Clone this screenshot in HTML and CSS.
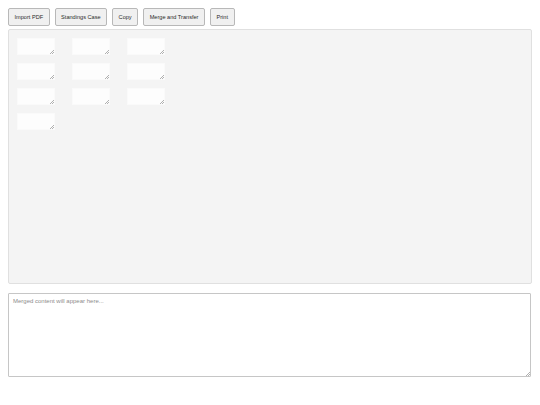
FILE: index.html
```html
<!DOCTYPE html>
<html>
<head>
<meta charset="utf-8">
<link rel="stylesheet" href="styles.css">
</head>
<body>
<div class="toolbar">
  <button class="btn">Import PDF</button>
  <button class="btn">Standings Case</button>
  <button class="btn">Copy</button>
  <button class="btn">Merge and Transfer</button>
  <button class="btn">Print</button>
</div>
<div class="panel">
  <div class="grid">
    <span class="cell-wrap"><textarea class="cell"></textarea></span>
    <span class="cell-wrap"><textarea class="cell"></textarea></span>
    <span class="cell-wrap"><textarea class="cell"></textarea></span>
    <span class="cell-wrap"><textarea class="cell"></textarea></span>
    <span class="cell-wrap"><textarea class="cell"></textarea></span>
    <span class="cell-wrap"><textarea class="cell"></textarea></span>
    <span class="cell-wrap"><textarea class="cell"></textarea></span>
    <span class="cell-wrap"><textarea class="cell"></textarea></span>
    <span class="cell-wrap"><textarea class="cell"></textarea></span>
    <span class="cell-wrap"><textarea class="cell"></textarea></span>
  </div>
</div>
<div class="output-wrap">
  <textarea class="output" placeholder="Merged content will appear here..."></textarea>
</div>
</body>
</html>
```

FILE: styles.css
```css
html, body {
  margin: 0;
  padding: 0;
  background: #ffffff;
}
body {
  padding: 8px;
  font-family: "Liberation Sans", Arial, sans-serif;
}
.toolbar {
  display: flex;
  gap: 5px;
  margin-bottom: 3px;
}
.btn {
  height: 18px;
  padding: 0 5.5px;
  font-family: "Liberation Sans", Arial, sans-serif;
  font-size: 5.6px;
  color: #2a2a2a;
  background: #f0f0f0;
  border: 1px solid #b8b8b8;
  border-radius: 2px;
}
.panel {
  box-sizing: border-box;
  width: 524px;
  height: 255px;
  background: #f4f4f4;
  border: 1px solid #e0e0e0;
  border-radius: 2px;
  padding: 8px;
}
.grid {
  display: grid;
  grid-template-columns: repeat(3, 38px);
  column-gap: 17px;
  row-gap: 8px;
}
.cell-wrap {
  position: relative;
  display: block;
  width: 38px;
  height: 17px;
}
.cell-wrap::after,
.output-wrap::after {
  content: "";
  position: absolute;
  right: 1px;
  bottom: 1px;
  width: 4px;
  height: 4px;
  background: linear-gradient(135deg,
    transparent 0, transparent 46%,
    #b0b0b0 46%, #b0b0b0 58%,
    transparent 58%, transparent 74%,
    #b0b0b0 74%, #b0b0b0 86%,
    transparent 86%);
}
.cell {
  display: block;
  box-sizing: border-box;
  width: 38px;
  height: 17px;
  margin: 0;
  padding: 1px;
  border: 1px solid #fafafa;
  background: #fdfdfd;
  font-size: 6px;
  resize: none;
  outline: none;
}
.output-wrap {
  position: relative;
  width: 523px;
  height: 84px;
  margin-top: 9px;
}
.output {
  display: block;
  box-sizing: border-box;
  width: 523px;
  height: 84px;
  margin: 0;
  padding: 4px 4px;
  border: 1px solid #c6c6c6;
  border-radius: 1px;
  font-family: "Liberation Sans", Arial, sans-serif;
  font-size: 6px;
  color: #333;
  resize: none;
  outline: none;
}
.output::placeholder {
  color: #8c8c8c;
}
```
